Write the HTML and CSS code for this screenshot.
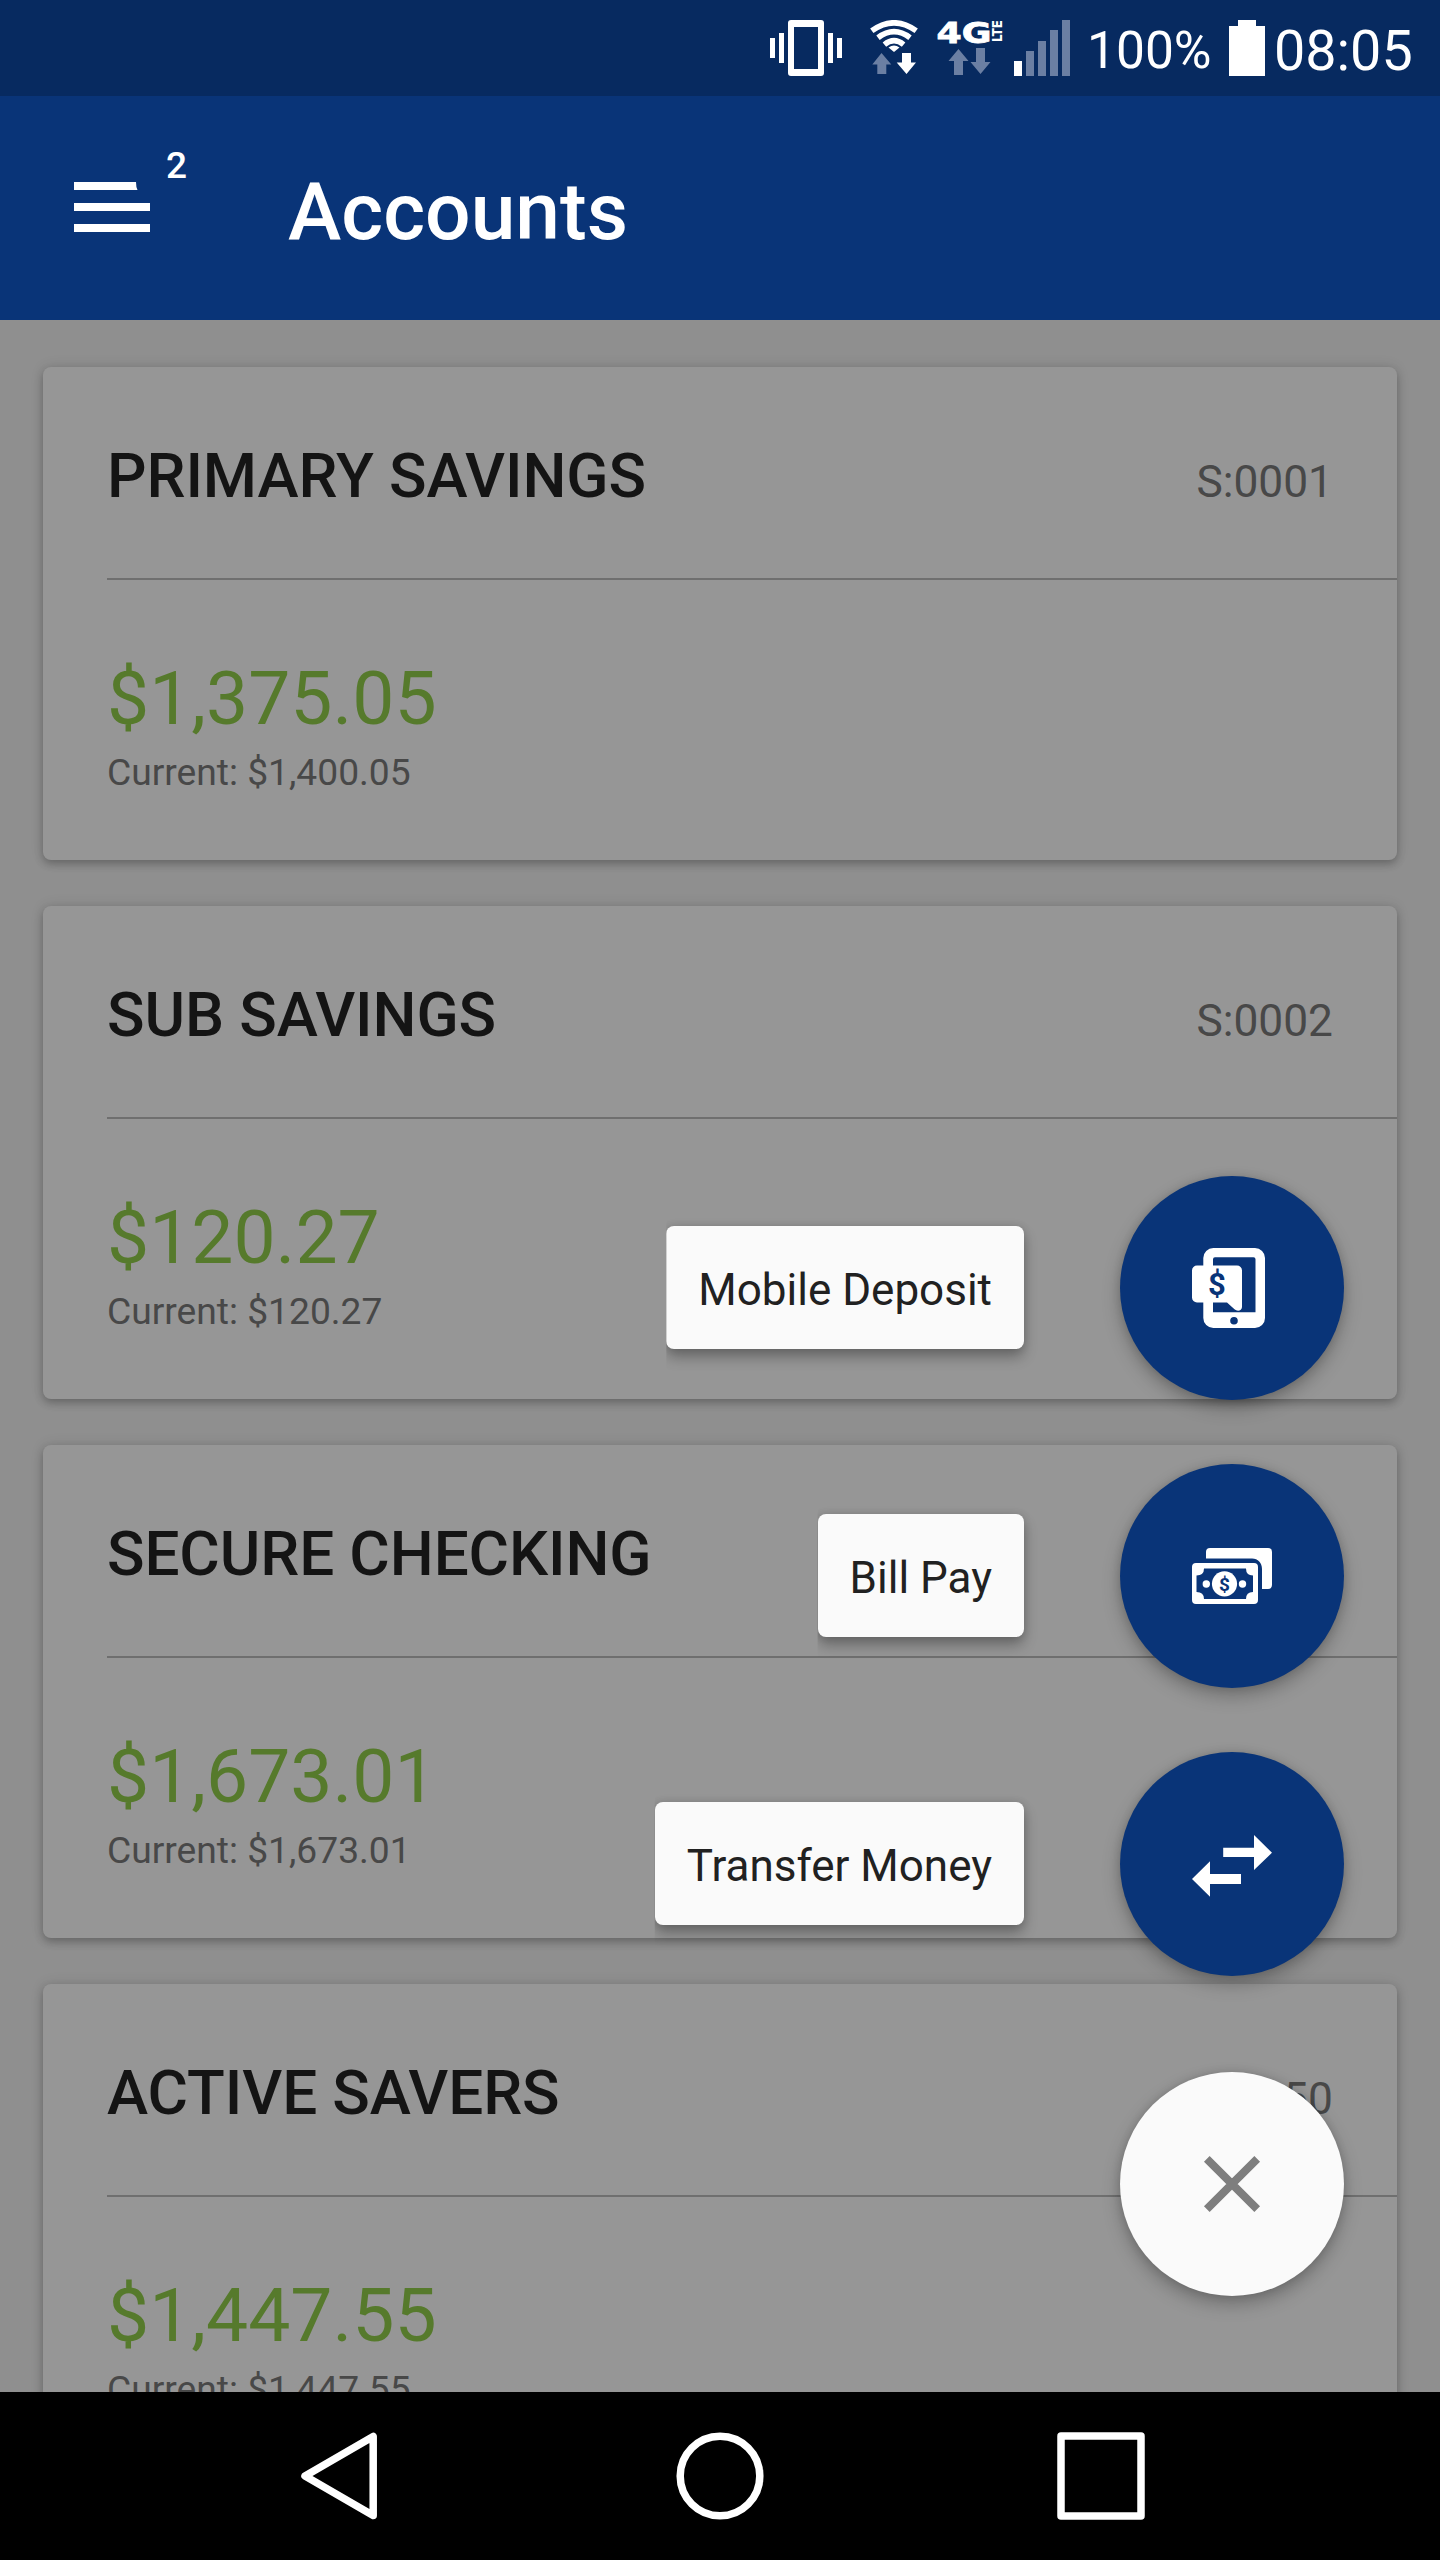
FILE: index.html
```html
<!DOCTYPE html>
<html lang="en">
<head>
  <meta charset="UTF-8" />
  <meta name="viewport" content="width=device-width, initial-scale=1.0" />
  <title>Accounts</title>
  <link rel="stylesheet" href="styles.css">
</head>
<body>
  <div class="screen">
    <div class="status-bar">
      <svg class="icon-vibrate" width="72" height="56" viewBox="0 0 72 56" fill="#fff">
        <rect x="0" y="18" width="5" height="20"/>
        <rect x="9" y="13" width="5" height="30"/>
        <path fill-rule="evenodd" d="M21 0h30a3 3 0 0 1 3 3v50a3 3 0 0 1-3 3H21a3 3 0 0 1-3-3V3a3 3 0 0 1 3-3zM24 7v42h24V7z"/>
        <rect x="58" y="13" width="5" height="30"/>
        <rect x="67" y="18" width="5" height="20"/>
      </svg>
      <svg class="icon-wifi" width="48" height="56" viewBox="0 0 48 56">
        <g fill="none" stroke="#fff" stroke-width="5.6">
          <path d="M1.8 10.8Q24 -5.2 46.2 10.8"/>
          <path d="M8 17.7Q24 5.6 40 17.7"/>
          <path d="M14.4 24.6Q24 16.8 33.6 24.6"/>
        </g>
        <path fill="#fff" d="M18.5 27.5Q24 23.5 29.5 27.5L24 32z"/>
        <path fill="#6b7fa3" d="M11.500 33l9.800 11.500h-5v9.500h-9v-9.500h-5z"/>
        <path fill="#fff" d="M32 33h9v9.500h5L36.500 54l-9.800-11.500h5.300z"/>
      </svg>
      <svg class="icon-4g" width="66" height="56" viewBox="0 0 66 56">
        <text class="net-label" x="-0.500" y="22.800" textLength="55" lengthAdjust="spacingAndGlyphs">4G</text>
        <text class="lte-label" transform="translate(65 22) rotate(-90)" textLength="22" lengthAdjust="spacingAndGlyphs">LTE</text>
        <path fill="#6b7fa3" d="M21.500 29l10 12h-5.500v14h-9V41h-5.500zM39 28h9v14h5.500l-10 12-10-12H39z"/>
      </svg>
      <svg class="icon-signal" width="56" height="56" viewBox="0 0 56 56" fill="#6b7fa3">
        <rect x="0" y="41" width="8" height="15" fill="#fff"/>
        <rect x="12" y="31" width="8" height="25"/>
        <rect x="24" y="21" width="8" height="35"/>
        <rect x="36" y="10" width="8" height="46"/>
        <rect x="48" y="0" width="8" height="56"/>
      </svg>
      <span class="battery-text">100%</span>
      <svg class="icon-battery" width="36" height="56" viewBox="0 0 36 56">
        <path fill="#fff" d="M9 0h18v6h9v50H0V6h9z"/>
      </svg>
      <span class="clock">08:05</span>
    </div>

    <header class="app-bar">
      <div class="menu-button">
        <svg width="76" height="50" viewBox="0 0 76 50" fill="#fff">
          <path d="M0 0h62q0 5 1.500 8H0z"/>
          <rect y="21" width="76" height="8"/>
          <rect y="42" width="76" height="8"/>
        </svg>
        <span class="badge">2</span>
      </div>
      <h1>Accounts</h1>
    </header>

    <main class="accounts">
      <section class="card">
        <div class="card-header">
          <h2>PRIMARY SAVINGS</h2>
          <span class="suffix">S:0001</span>
        </div>
        <div class="card-body">
          <div class="amount">$1,375.05</div>
          <div class="current">Current: $1,400.05</div>
        </div>
      </section>

      <section class="card">
        <div class="card-header">
          <h2>SUB SAVINGS</h2>
          <span class="suffix">S:0002</span>
        </div>
        <div class="card-body">
          <div class="amount">$120.27</div>
          <div class="current">Current: $120.27</div>
        </div>
      </section>

      <section class="card">
        <div class="card-header">
          <h2>SECURE CHECKING</h2>
        </div>
        <div class="card-body">
          <div class="amount">$1,673.01</div>
          <div class="current">Current: $1,673.01</div>
        </div>
      </section>

      <section class="card">
        <div class="card-header">
          <h2>ACTIVE SAVERS</h2>
          <span class="suffix">S:0050</span>
        </div>
        <div class="card-body">
          <div class="amount">$1,447.55</div>
          <div class="current">Current: $1,447.55</div>
        </div>
      </section>
    </main>

    <nav class="nav-bar">
      <svg width="90" height="90" viewBox="0 0 90 90">
        <path d="M11 45L79.200 5.500v79z"/>
      </svg>
      <svg width="90" height="90" viewBox="0 0 90 90">
        <circle cx="45" cy="45" r="39.800"/>
      </svg>
      <svg width="90" height="90" viewBox="0 0 90 90">
        <rect x="5" y="5" width="80" height="80"/>
      </svg>
    </nav>

    <!-- floating action menu -->
    <div class="fab-menu">
      <div class="fab-item">
        <span class="fab-label">Mobile Deposit</span>
        <div class="fab">
          <svg width="96" height="96" viewBox="0 0 96 96" fill="#fff">
            <path fill-rule="evenodd" d="M29.300 8H71a10 10 0 0 1 10 10v60a10 10 0 0 1-10 10H29.300a10 10 0 0 1-10-10V18a10 10 0 0 1 10-10zM31 17.300a2 2 0 0 0-2 2V72.300h42.500v-53a2 2 0 0 0-2-2zM50 77a3.800 3.800 0 1 0 0 7.600 3.800 3.800 0 0 0 0-7.600z"/>
            <path d="M13 25.500h40a5 5 0 0 1 5 5V67c0 4-5 4.600-7.500 2.300L43 62.500H13a5 5 0 0 1-5-5v-27a5 5 0 0 1 5-5z"/>
            <text class="dollar" x="33" y="55" font-size="31">$</text>
          </svg>
        </div>
      </div>
      <div class="fab-item">
        <span class="fab-label">Bill Pay</span>
        <div class="fab">
          <svg width="96" height="96" viewBox="0 0 96 96" fill="#fff">
            <path d="M26 20h58a4 4 0 0 1 4 4v33a4 4 0 0 1-4 4h-6V41c0-6-4-10.500-10-10.500H22V24a4 4 0 0 1 4-4z"/>
            <path fill-rule="evenodd" d="M12 35h58a4 4 0 0 1 4 4v33a4 4 0 0 1-4 4H12a4 4 0 0 1-4-4V39a4 4 0 0 1 4-4zM20 40.500q0 7-7.500 7v16.500q7.500 0 7.500 7h42q0-7 7-7V47.500q-7 0-7-7z"/>
            <circle cx="40.500" cy="55.800" r="12.600"/>
            <circle cx="22.300" cy="56" r="3.700"/>
            <circle cx="58.500" cy="56" r="3.700"/>
            <text class="dollar" x="40.500" y="62.600" font-size="19">$</text>
          </svg>
        </div>
      </div>
      <div class="fab-item">
        <span class="fab-label">Transfer Money</span>
        <div class="fab">
          <svg width="96" height="96" viewBox="0 0 96 96" fill="#fff">
            <path d="M39.200 31.700H70V19l18 17.700L70 54V41H39.200z"/>
            <path d="M57 58H26V45.300L8 63l18 17.700V68h31z"/>
          </svg>
        </div>
      </div>
      <div class="fab fab-close">
        <svg width="96" height="96" viewBox="0 0 96 96">
          <path d="M22.800 22.800l50.400 50.400M73.200 22.800L22.800 73.200" stroke="#7e7e7e" stroke-width="8"/>
        </svg>
      </div>
    </div>
  </div>
</body>
</html>
```
FILE: styles.css
```css
* {
  box-sizing: border-box;
}

body {
  margin: 0;
  font-family: Roboto, sans-serif;
  background: #8f8f8f;
}

h1, h2 {
  margin: 0;
  font-weight: 500;
}

svg {
  display: block;
  flex: none;
}

.screen {
  position: relative;
  display: flex;
  flex-direction: column;
  width: 1440px;
  height: 2560px;
  overflow: hidden;
}

/* status bar */
.status-bar {
  display: flex;
  align-items: center;
  flex: none;
  height: 96px;
  padding-left: 770px;
  background: #072a60;
  color: #fff;
  white-space: nowrap;
}

.icon-wifi {
  margin-left: 28px;
}

.icon-4g {
  margin-left: 19px;
  overflow: visible;
}

.icon-signal {
  margin-left: 11px;
}

.net-label {
  font-family: "DejaVu Sans", sans-serif;
  font-weight: bold;
  font-size: 29px;
  fill: #fff;
  stroke: #fff;
  stroke-width: 0.8px;
}

.lte-label {
  font-family: "DejaVu Sans", sans-serif;
  font-weight: bold;
  font-size: 13.5px;
  fill: #fff;
}

.battery-text {
  width: 142px;
  margin-left: 17px;
  padding-top: 5px;
  font-size: 51.5px;
  line-height: 60px;
}

.clock {
  margin-left: 9px;
  padding-top: 6px;
  font-size: 55.7px;
  line-height: 60px;
}

/* app bar */
.app-bar {
  display: flex;
  align-items: center;
  flex: none;
  height: 224px;
  padding: 0 74px;
  background: #093478;
  color: #fff;
}

.menu-button {
  position: relative;
  width: 76px;
  margin: 0 138px 2px 0;
}

.badge {
  position: absolute;
  left: 92px;
  top: -38px;
  font-size: 37px;
  font-weight: 500;
  line-height: 44px;
}

.app-bar h1 {
  padding-top: 7px;
  font-size: 80.3px;
  line-height: 94px;
}

/* account list */
.accounts {
  display: flex;
  flex-direction: column;
  gap: 46px;
  flex: 1;
  min-height: 0;
  padding: 47px 43px 0;
  overflow: hidden;
}

.card {
  flex: none;
  height: 493px;
  padding-left: 64px;
  background: #969696;
  border-radius: 8px;
  box-shadow: 0 4px 8px rgba(0, 0, 0, 0.24), 0 0 14px rgba(0, 0, 0, 0.1);
}

.card-header {
  display: flex;
  align-items: baseline;
  justify-content: space-between;
  height: 213px;
  padding: 72px 64px 0 0;
  border-bottom: 2px solid #6f6f6f;
}

.card h2 {
  font-size: 62px;
  line-height: 74px;
  letter-spacing: -0.1px;
  color: #141414;
}

.suffix {
  font-size: 44.3px;
  color: #484848;
}

.card-body {
  padding-top: 73px;
}

.amount {
  font-size: 75px;
  line-height: 90px;
  color: #567a2c;
}

.current {
  font-size: 37.2px;
  line-height: 45px;
  padding-top: 7px;
  color: #484848;
}

/* bottom navigation */
.nav-bar {
  display: flex;
  align-items: center;
  justify-content: center;
  gap: 291px;
  flex: none;
  height: 168px;
  background: #000;
}

.nav-bar svg {
  fill: none;
  stroke: #fff;
  stroke-width: 7.5px;
  stroke-linejoin: round;
}

/* floating menu */
.fab-menu {
  position: absolute;
  right: 96px;
  top: 1176px;
  display: flex;
  flex-direction: column;
  align-items: flex-end;
  gap: 64px;
}

.fab-item {
  display: flex;
  align-items: center;
  gap: 96px;
}

.fab-label {
  height: 123px;
  margin-bottom: 1px;
  padding: 37px 32px 0;
  font-size: 44px;
  line-height: 54px;
  white-space: nowrap;
  color: #212121;
  background: #fafafa;
  border-radius: 8px;
  box-shadow: 0 8px 14px rgba(0, 0, 0, 0.3), 0 0 8px rgba(0, 0, 0, 0.12);
  clip-path: inset(-20px -30px -40px 0);
}

.fab {
  display: flex;
  align-items: center;
  justify-content: center;
  width: 224px;
  height: 224px;
  border-radius: 50%;
  background: #093478;
  box-shadow: 0 8px 18px rgba(0, 0, 0, 0.26), 0 0 8px rgba(0, 0, 0, 0.12);
}

.fab-close {
  margin-top: 32px;
  background: #fafafa;
}

.dollar {
  font-weight: bold;
  text-anchor: middle;
  fill: #093478;
}
```
